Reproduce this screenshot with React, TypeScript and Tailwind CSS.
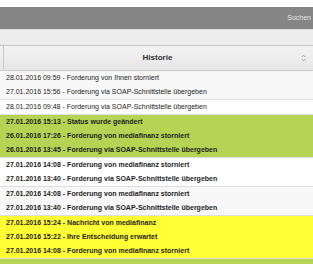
import React from "react";

type Entry = { text: string; bold?: boolean };
type Group = { bg: string; rows: Entry[] };

const groups: Group[] = [
  {
    bg: "bg-[#f7f7f7]",
    rows: [
      { text: "28.01.2016 09:59 - Forderung von Ihnen storniert" },
      { text: "27.01.2016 15:56 - Forderung via SOAP-Schnittstelle übergeben" },
    ],
  },
  {
    bg: "bg-white",
    rows: [{ text: "28.01.2016 09:48 - Forderung via SOAP-Schnittstelle übergeben" }],
  },
  {
    bg: "bg-[#b5d454]",
    rows: [
      { text: "27.01.2016 15:13 - Status wurde geändert", bold: true },
      { text: "26.01.2016 17:26 - Forderung von mediafinanz storniert", bold: true },
      { text: "26.01.2016 13:45 - Forderung via SOAP-Schnittstelle übergeben", bold: true },
    ],
  },
  {
    bg: "bg-white",
    rows: [
      { text: "27.01.2016 14:08 - Forderung von mediafinanz storniert", bold: true },
      { text: "27.01.2016 13:40 - Forderung via SOAP-Schnittstelle übergeben", bold: true },
    ],
  },
  {
    bg: "bg-[#f7f7f7]",
    rows: [
      { text: "27.01.2016 14:08 - Forderung von mediafinanz storniert", bold: true },
      { text: "27.01.2016 13:40 - Forderung via SOAP-Schnittstelle übergeben", bold: true },
    ],
  },
  {
    bg: "bg-[#ffff33]",
    rows: [
      { text: "27.01.2016 15:24 - Nachricht von mediafinanz", bold: true },
      { text: "27.01.2016 15:22 - Ihre Entscheidung erwartet", bold: true },
      { text: "27.01.2016 14:08 - Forderung von mediafinanz storniert", bold: true },
    ],
  },
  {
    bg: "bg-[#b5d454]",
    rows: [{ text: "" }],
  },
];

function SortIcon() {
  return (
    <svg width="5" height="8" viewBox="0 0 5 8" className="text-[#9a9a9a]">
      <path d="M0.8 3 L2.5 1.2 L4.2 3" fill="none" stroke="currentColor" strokeWidth="0.9" />
      <path d="M0.8 5 L2.5 6.8 L4.2 5" fill="none" stroke="currentColor" strokeWidth="0.9" />
    </svg>
  );
}

export default function App() {
  return (
    <div className="w-[313px] h-[264px] overflow-hidden bg-white font-['Liberation_Sans',Arial,sans-serif] text-[#1e1e1e]">
      <div className="h-[7px]" />
      <div className="h-[22px] bg-[#858585] flex items-center justify-end pr-[2px]">
        <span className="text-[7px] text-[#e4e4e4]">Suchen</span>
      </div>
      <div className="h-[17px] bg-[#ededed] border-t border-b border-t-[#dadada] border-b-[#c6c6c6]" />
      <div className="h-[25px] flex border-b border-[#cbcbcb] bg-gradient-to-b from-[#f3f3f3] to-[#e6e6e6]">
        <div className="w-[4px] border-r border-[#c8c8c8]" />
        <div className="flex-1 flex items-center justify-center text-[8px] font-bold text-[#333] pl-[10px]">
          Historie
        </div>
        <div className="w-[12px] flex items-center justify-start">
          <SortIcon />
        </div>
      </div>
      {groups.map((g, i) => (
        <div key={i} className={`${g.bg} border-b border-[#dedede]`}>
          {g.rows.map((r, j) => (
            <div
              key={j}
              className={`h-[14px] flex items-center pl-[6px] text-[7px] whitespace-nowrap ${r.bold ? "font-bold" : ""}`}
            >
              {r.text}
            </div>
          ))}
        </div>
      ))}
    </div>
  );
}
